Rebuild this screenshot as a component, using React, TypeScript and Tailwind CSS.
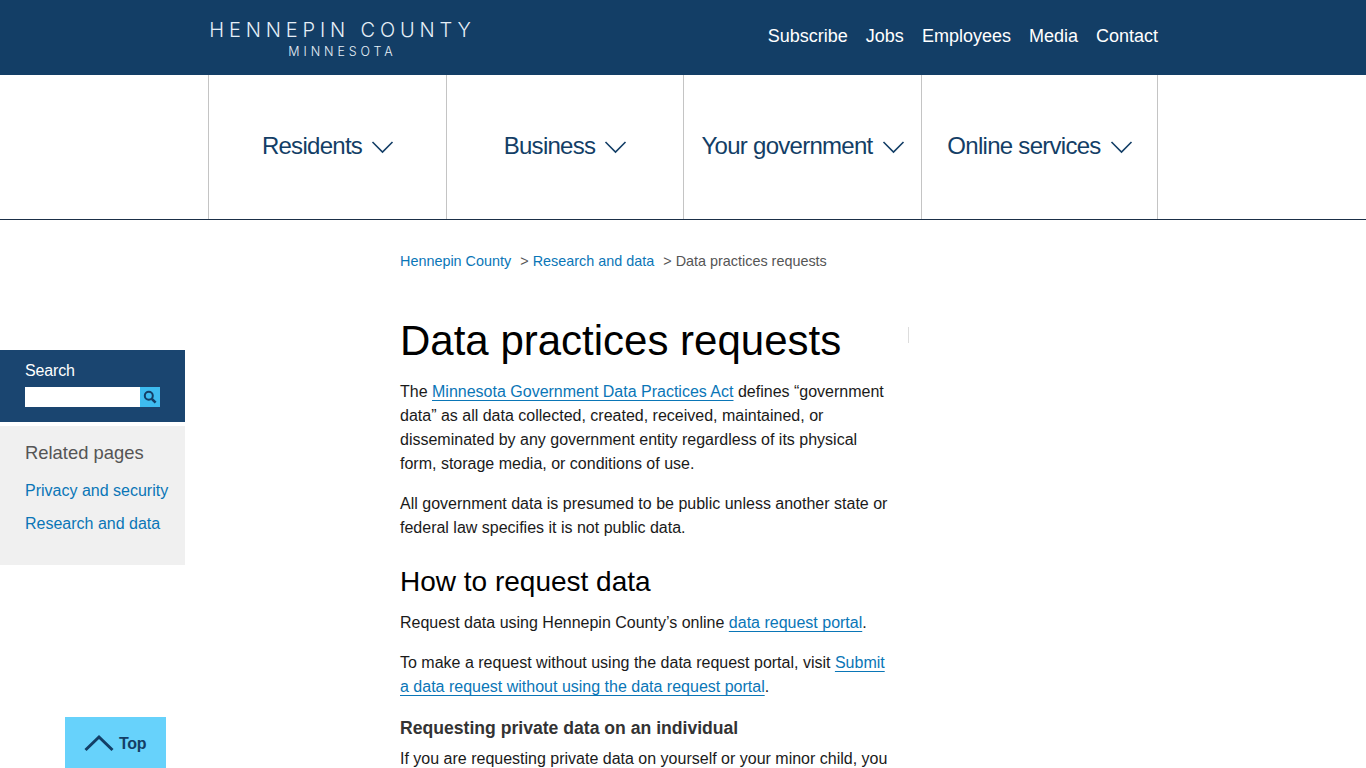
import React from "react";

const Chevron = ({ className = "" }: { className?: string }) => (
  <svg className={className} width="24" height="14" viewBox="0 0 24 14" fill="none" stroke="#133e66" strokeWidth="1.6">
    <path d="M1.5 2 L11.5 12 L21.5 2" />
  </svg>
);

const A = ({ children }: { children: React.ReactNode }) => (
  <a className="text-[#0a76b7] underline underline-offset-[3px] decoration-1">{children}</a>
);

const navs = [
  { t: "Residents", w: "w-[238px]" },
  { t: "Business", w: "w-[237px]" },
  { t: "Your government", w: "w-[238px]" },
  { t: "Online services", w: "w-[237px]" },
];

export default function App() {
  return (
    <div className="relative h-[768px] overflow-hidden bg-white font-['Liberation_Sans',Arial,sans-serif] text-[16px] leading-6 text-[#1a1a1a]">
      <header className="h-[75px] bg-[#133e66] flex pl-[211px] pr-[208px] justify-between items-center text-white">
        <div className="w-[263px] flex flex-col items-center font-['Inter',sans-serif] font-light text-[#e6eff7] pt-[2px]">
          <div className="text-[20px] leading-[24px] tracking-[4.85px] whitespace-nowrap">HENNEPIN COUNTY</div>
          <div className="text-[12.5px] leading-[16px] tracking-[3.9px] whitespace-nowrap mt-[2px]">MINNESOTA</div>
        </div>
        <nav className="flex gap-[18px] text-[18px] pb-[3px]">
          <a>Subscribe</a>
          <a>Jobs</a>
          <a>Employees</a>
          <a>Media</a>
          <a>Contact</a>
        </nav>
      </header>

      <div className="h-[145px] border-b border-[#1b2f47] pl-[208px] flex">
        {navs.map((n) => (
          <div key={n.t} className={`${n.w} h-[144px] border-l border-[#c4c4c4] last:border-r flex items-center justify-center gap-[9px] text-[24px] tracking-[-0.72px] text-[#133e66] pb-[2px] pl-[2px]`}>
            <span className="whitespace-nowrap">{n.t}</span>
            <Chevron className="mt-[2px]" />
          </div>
        ))}
      </div>

      <div className="flex">
        <aside className="w-[185px] pt-[130px] shrink-0">
          <div className="h-[72px] bg-[#1a4570] pl-[25px] pt-[9px] text-white">
            <div className="leading-6 tracking-[-0.15px]">Search</div>
            <div className="flex w-[135px] h-[20px] mt-[4px]">
              <div className="w-[115px] bg-white" />
              <div className="w-[20px] bg-[#3ebcf0] flex items-center justify-center">
                <svg width="14" height="14" viewBox="0 0 14 14" fill="none" stroke="#133e66">
                  <circle cx="5.8" cy="5.8" r="4" strokeWidth="2" />
                  <path d="M8.8 8.8 L12.6 12.6" strokeWidth="2.6" />
                </svg>
              </div>
            </div>
          </div>
          <div className="mt-[4px] h-[139px] bg-[#f0f0f0] pl-[25px] pt-[15px]">
            <div className="text-[18.4px] leading-6 text-[#555]">Related pages</div>
            <div className="mt-[14px] text-[#0a76b7]">Privacy and security</div>
            <div className="mt-[9px] text-[#0a76b7]">Research and data</div>
          </div>
        </aside>

        <main className="ml-[215px] w-[509px] relative">
          <div className="pt-[29px] text-[14.4px] leading-6 text-[#555] whitespace-pre">
            <span className="text-[#0a76b7]">Hennepin County</span>
            <span className="ml-[9px]">&gt; </span>
            <span className="text-[#0a76b7]">Research and data</span>
            <span className="ml-[9px]">&gt; Data practices requests</span>
          </div>
          <h1 className="mt-[40px] text-[42px] leading-[56px] text-black font-normal">Data practices requests</h1>
          <div className="absolute left-[508px] top-[107px] w-px h-[16px] bg-[#dddddd]" />
          <div className="w-[490px]">
            <p className="mt-[11px]">The <A>Minnesota Government Data Practices Act</A> defines “government data” as all data collected, created, received, maintained, or disseminated by any government entity regardless of its physical form, storage media, or conditions of use.</p>
            <p className="mt-[16px]">All government data is presumed to be public unless another state or federal law specifies it is not public data.</p>
            <h2 className="mt-[25px] text-[28px] leading-[34px] text-black font-normal">How to request data</h2>
            <p className="mt-[12px]">Request data using Hennepin County’s online <A>data request portal</A>.</p>
            <p className="mt-[16px]">To make a request without using the data request portal, visit <A>Submit a data request without using the data request portal</A>.</p>
            <h3 className="mt-[17px] text-[17.6px] leading-6 font-bold text-[#333]">Requesting private data on an individual</h3>
            <p className="mt-[7px]">If you are requesting private data on yourself or your minor child, you</p>
          </div>
        </main>
      </div>

      <div className="absolute left-[65px] top-[717px] w-[101px] h-[51px] bg-[#67d2fb] flex items-center pl-[19px] gap-[5px] text-[#133e66] font-bold text-[16px]">
        <svg width="30" height="18" viewBox="0 0 30 18" fill="none" stroke="#133e66" strokeWidth="3">
          <path d="M1.5 16 L15 3 L28.5 16" />
        </svg>
        <span className="tracking-[-0.3px] mt-[2px]">Top</span>
      </div>
    </div>
  );
}
